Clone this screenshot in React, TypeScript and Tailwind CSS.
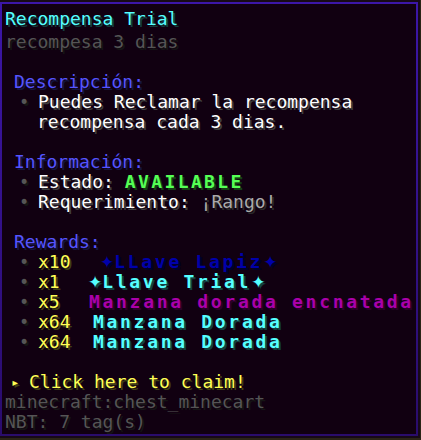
const sh = {
  aqua: "text-[#55ffff] [text-shadow:2px_2px_0_#153f3f]",
};

function Bullet() {
  return (
    <span className="inline-flex h-[20px] w-[33px] items-center pl-[14px] text-[17px] leading-[20px] text-[#555555] [text-shadow:2px_2px_0_#151515]">
      •
    </span>
  );
}

function Star() {
  return <span className="font-['DejaVu_Sans',sans-serif] text-[17px] leading-[20px] tracking-normal">✦</span>;
}

export default function App() {
  return (
    <div className="w-[421px] h-[440px] overflow-hidden bg-[#2a2417]">
      <div className="-ml-[2px] w-[422px] p-[2px] bg-[#170a17]">
        <div className="p-[2px] bg-linear-to-b from-[#3c16a8] to-[#2a0c6c]">
          <div className="bg-[#110011] pl-[3px] pt-[5px] pb-[2px] font-['DejaVu_Sans_Mono',monospace] text-[18px] leading-[20px] whitespace-pre">
            <div className={"h-[20px] mb-[3px] " + sh.aqua}>Recompensa Trial</div>
            <div className="h-[20px] text-[#555555] [text-shadow:2px_2px_0_#151515]">recompesa 3 dias</div>
            <div className="h-[20px]" />
            <div className="h-[20px] pl-[9px] text-[#5555ff] [text-shadow:2px_2px_0_#15153f]">Descripción:</div>
            <div className="h-[20px] flex items-center">
              <Bullet />
              <span className="text-white [text-shadow:2px_2px_0_#3f3f3f]">Puedes Reclamar la recompensa</span>
            </div>
            <div className="h-[20px] pl-[32px] text-white [text-shadow:2px_2px_0_#3f3f3f]">recompensa cada 3 dias.</div>
            <div className="h-[20px]" />
            <div className="h-[20px] pl-[9px] text-[#5555ff] [text-shadow:2px_2px_0_#15153f]">Información:</div>
            <div className="h-[20px] flex items-center">
              <Bullet />
              <span className="text-white [text-shadow:2px_2px_0_#3f3f3f]">Estado: </span>
              <span className="font-bold tracking-[2.4px] text-[#55ff55] [text-shadow:2px_2px_0_#153f15]">AVAILABLE</span>
            </div>
            <div className="h-[20px] flex items-center">
              <Bullet />
              <span className="text-white [text-shadow:2px_2px_0_#3f3f3f]">Requerimiento: </span>
              <span className="text-[#aaaaaa] [text-shadow:2px_2px_0_#2a2a2a]">¡Rango!</span>
            </div>
            <div className="h-[20px]" />
            <div className="h-[20px] pl-[9px] text-[#5555ff] [text-shadow:2px_2px_0_#15153f]">Rewards:</div>
            <div className="h-[20px] flex items-center">
              <Bullet />
              <span className="inline-block w-[62px] text-[#ffff55] [text-shadow:2px_2px_0_#3f3f15]">x10</span>
              <span className="font-bold tracking-[2.7px] text-[#0000aa] [text-shadow:2px_2px_0_#00002a]">
                <Star />LLave Lapiz<Star />
              </span>
            </div>
            <div className="h-[20px] flex items-center">
              <Bullet />
              <span className="inline-block w-[50px] text-[#ffff55] [text-shadow:2px_2px_0_#3f3f15]">x1</span>
              <span className={"font-bold tracking-[2.7px] " + sh.aqua}>
                <Star />Llave Trial<Star />
              </span>
            </div>
            <div className="h-[20px] flex items-center">
              <Bullet />
              <span className="inline-block w-[51px] text-[#ffff55] [text-shadow:2px_2px_0_#3f3f15]">x5</span>
              <span className="font-bold tracking-[2.7px] text-[#aa00aa] [text-shadow:2px_2px_0_#2a002a]">Manzana dorada encnatada</span>
            </div>
            <div className="h-[20px] flex items-center">
              <Bullet />
              <span className="inline-block w-[55px] text-[#ffff55] [text-shadow:2px_2px_0_#3f3f15]">x64</span>
              <span className={"font-bold tracking-[2.7px] " + sh.aqua}>Manzana Dorada</span>
            </div>
            <div className="h-[20px] flex items-center">
              <Bullet />
              <span className="inline-block w-[55px] text-[#ffff55] [text-shadow:2px_2px_0_#3f3f15]">x64</span>
              <span className={"font-bold tracking-[2.7px] " + sh.aqua}>Manzana Dorada</span>
            </div>
            <div className="h-[20px]" />
            <div className="h-[20px] flex items-center text-[#ffff55] [text-shadow:2px_2px_0_#3f3f15]">
              <span className="inline-block w-[24px] pl-[6px] text-[14px]">▸</span>
              <span>Click here to claim!</span>
            </div>
            <div className="h-[20px] text-[#555555] [text-shadow:2px_2px_0_#151515]">minecraft:chest_minecart</div>
            <div className="h-[20px] text-[#555555] [text-shadow:2px_2px_0_#151515]">NBT: 7 tag(s)</div>
          </div>
        </div>
      </div>
    </div>
  );
}
